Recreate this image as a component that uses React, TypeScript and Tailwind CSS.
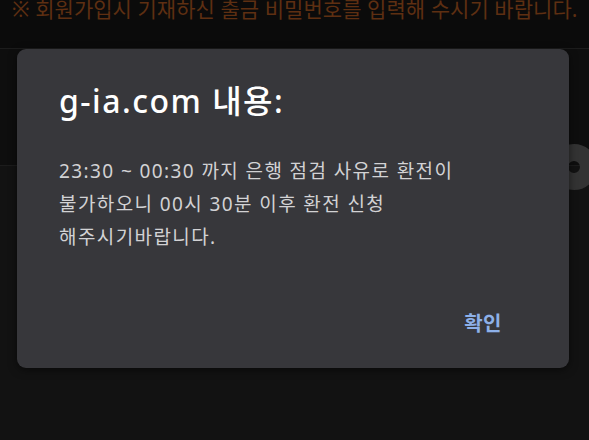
import React from 'react';

const App = () => {
  return (
    <div className="relative w-[589px] h-[440px] overflow-hidden bg-[#121212] font-['Noto_Sans','Noto_Sans_CJK_KR',sans-serif]">
      {/* page behind the dialog */}
      <div className="h-[48px] bg-[#0b0b0b] px-[12px] overflow-hidden">
        <p className="-mt-[4px] text-[21px] leading-[26px] text-[#5e2f12] whitespace-nowrap tracking-[0.05px]">
          ※ 회원가입시 기재하신 출금 비밀번호를 입력해 수시기 바랍니다.
        </p>
      </div>
      <div className="relative h-[118px] bg-[#0e0e0e] border-y border-[#1c1c1c]">
        <div className="absolute left-[551px] top-[95px] w-[46px] h-[46px] rounded-full border-[17px] border-[#333333]" />
      </div>

      {/* alert dialog */}
      <div className="absolute left-[17px] top-[49px] w-[552px] h-[319px] rounded-[9px] bg-[#37373b] shadow-[0_2px_8px_rgba(0,0,0,0.5)] flex flex-col pl-[42px] pr-[50px]">
        <h1 className="mt-[32px] text-[32px] leading-[40px] font-medium text-white tracking-[1.5px]">
          g-ia.com 내용:
        </h1>
        <div className="mt-[34px] text-[19px] leading-[33px] text-[#d2d2d4] tracking-[1.4px]">
          <p>23:30 ~ 00:30 까지 은행 점검 사유로 환전이</p>
          <p>불가하오니 00시 30분 이후 환전 신청</p>
          <p>해주시기바랍니다.</p>
        </div>
        <div className="mt-auto mb-[30px] flex justify-end">
          <button className="text-[20px] leading-[28px] font-semibold text-[#8db0e8] pr-[17px] tracking-[0.5px]">확인</button>
        </div>
      </div>
    </div>
  );
};

export default App;
